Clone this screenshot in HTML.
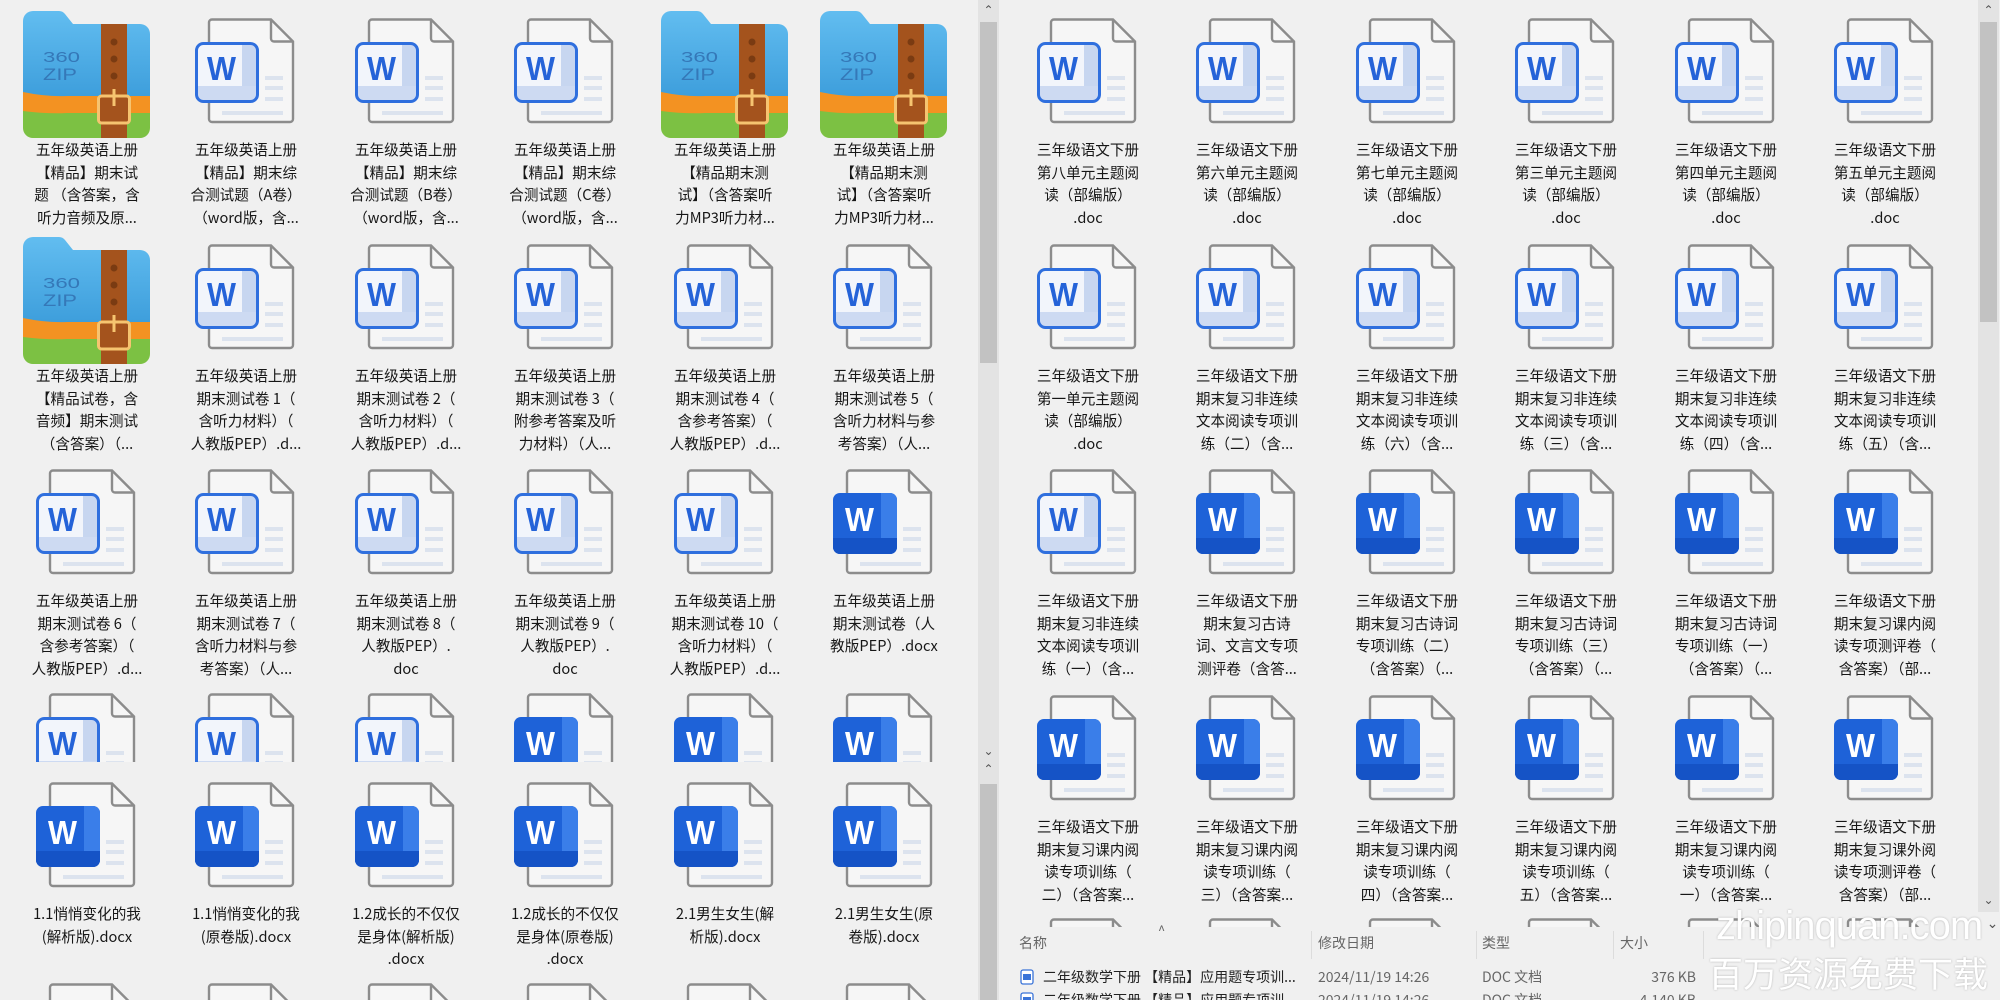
<!DOCTYPE html>
<html><head><meta charset="utf-8">
<style>
*{margin:0;padding:0;box-sizing:border-box}
html,body{width:2000px;height:1000px;overflow:hidden;background:#f0f0f0;font-family:"Liberation Sans","Noto Sans CJK SC",sans-serif;position:relative}
.c{position:absolute;width:160px;height:140px}
.c svg{position:absolute;left:0;top:0;width:160px;height:140px}
.c p{position:absolute;left:-4px;top:139px;width:168px;text-align:center;font-size:14.6px;line-height:22.5px;color:#161616;font-family:"Noto Sans CJK SC","WenQuanYi Zen Hei",sans-serif;white-space:nowrap}
.clip{position:absolute;overflow:hidden}
.sb{position:absolute;width:21px;background:#e3e3e3;overflow:hidden}
.th{position:absolute;left:2px;width:17px;background:#c2c2c2}
.ar{position:absolute;left:0;width:21px;text-align:center;font-size:12px;color:#555;line-height:14px}
.hd{position:absolute;font-size:14px;color:#666;font-family:"Noto Sans CJK SC",sans-serif}
.rw{position:absolute;font-size:14px;color:#222;font-family:"Noto Sans CJK SC",sans-serif;white-space:nowrap}
.sep{position:absolute;top:931px;width:1px;height:28px;background:#dcdcdc}
.wm{position:absolute;color:#fff;text-shadow:0 0 2px rgba(0,0,0,.25);white-space:nowrap}
</style></head><body>
<svg width="0" height="0" style="position:absolute">
<defs>
<symbol id="pg" viewBox="0 0 160 140">
<path d="M46,19.5 H105 L127,41.5 V119 a3,3 0 0 1 -3,3 H46 a3,3 0 0 1 -3,-3 V22.5 a3,3 0 0 1 3,-3 z" fill="#f6f6f6" stroke="#8c8c8c" stroke-width="2.4"/>
<path d="M105,19.5 V38.5 a3,3 0 0 0 3,3 H127" fill="none" stroke="#8c8c8c" stroke-width="2.4"/>
<rect x="99" y="76" width="18" height="4" fill="#dce3ee"/>
<rect x="99" y="86" width="18" height="4" fill="#dce3ee"/>
<rect x="99" y="97" width="18" height="4" fill="#dce3ee"/>
<rect x="56" y="111" width="61" height="4" fill="#dce3ee"/>
</symbol>
<symbol id="wo" viewBox="0 0 160 140">
<use href="#pg"/>
<rect x="30.5" y="43.5" width="61" height="58" rx="7" fill="#f2f5fb"/>
<rect x="76" y="45" width="14" height="55" fill="#c7d6f0"/>
<rect x="32" y="86" width="58" height="14" fill="#cddaf2"/>
<rect x="30.5" y="43.5" width="61" height="58" rx="7" fill="none" stroke="#2f6fde" stroke-width="3"/>
<text x="41" y="80" font-family="Liberation Sans" font-weight="bold" font-size="33" fill="#2563d8" textLength="29" lengthAdjust="spacingAndGlyphs">W</text>
</symbol>
<symbol id="ws" viewBox="0 0 160 140">
<use href="#pg"/>
<rect x="29" y="42" width="64" height="61" rx="7" fill="#1e62d8"/>
<path d="M77,42 H86 a7,7 0 0 1 7,7 V96 a7,7 0 0 1 -7,7 H77 z" fill="#3a7ee9"/>
<path d="M29,87 H93 V96 a7,7 0 0 1 -7,7 H36 a7,7 0 0 1 -7,-7 z" fill="#1553c6"/>
<text x="41" y="80" font-family="Liberation Sans" font-weight="bold" font-size="33" fill="#fff" textLength="29" lengthAdjust="spacingAndGlyphs">W</text>
</symbol>
<symbol id="zp" viewBox="0 0 160 140">
<defs><linearGradient id="bg" x1="0" y1="0" x2="0" y2="1"><stop offset="0" stop-color="#62bdf0"/><stop offset="1" stop-color="#3c9ddb"/></linearGradient></defs>
<path d="M26,11 H52 a8,8 0 0 1 6,3 L66,24 H133 a10,10 0 0 1 10,10 V100 H16 V21 a10,10 0 0 1 10,-10 z" fill="url(#bg)"/>
<path d="M16,92 Q40,97 60,96 H143 V115 H16 z" fill="#f39222"/>
<path d="M16,111 Q40,114 60,113 H143 V128 a10,10 0 0 1 -10,10 H26 a10,10 0 0 1 -10,-10 z" fill="#7cc143"/>
<rect x="94" y="24" width="26" height="114" fill="#a4531d"/>
<circle cx="107" cy="42" r="3.5" fill="#7a3b12"/>
<circle cx="107" cy="59" r="3.5" fill="#7a3b12"/>
<circle cx="107" cy="76" r="3.5" fill="#7a3b12"/>
<rect x="91.5" y="96" width="31" height="27" rx="3" fill="#a4531d" stroke="#f6c470" stroke-width="3"/>
<rect x="105.5" y="89" width="3" height="17" fill="#f6c470"/>
<text x="36" y="62" font-family="Liberation Sans" font-size="15" fill="#3578b8" textLength="37" lengthAdjust="spacingAndGlyphs">360</text>
<text x="36" y="80" font-family="Liberation Sans" font-size="17" fill="#3578b8" textLength="34" lengthAdjust="spacingAndGlyphs">ZIP</text>
</symbol>
</defs></svg>

<!-- LEFT PANEL -->
<div class="clip" style="left:0;top:0;width:978px;height:1000px">
<div class="c" style="left:7px;top:0"><svg><use href="#zp"/></svg><p>五年级英语上册<br>【精品】期末试<br>题 （含答案，含<br>听力音频及原...</p></div>
<div class="c" style="left:166px;top:0"><svg><use href="#wo"/></svg><p>五年级英语上册<br>【精品】期末综<br>合测试题（A卷）<br>（word版，含...</p></div>
<div class="c" style="left:326px;top:0"><svg><use href="#wo"/></svg><p>五年级英语上册<br>【精品】期末综<br>合测试题（B卷）<br>（word版，含...</p></div>
<div class="c" style="left:485px;top:0"><svg><use href="#wo"/></svg><p>五年级英语上册<br>【精品】期末综<br>合测试题（C卷）<br>（word版，含...</p></div>
<div class="c" style="left:645px;top:0"><svg><use href="#zp"/></svg><p>五年级英语上册<br>【精品期末测<br>试】（含答案听<br>力MP3听力材...</p></div>
<div class="c" style="left:804px;top:0"><svg><use href="#zp"/></svg><p>五年级英语上册<br>【精品期末测<br>试】（含答案听<br>力MP3听力材...</p></div>
<div class="c" style="left:7px;top:226px"><svg><use href="#zp"/></svg><p>五年级英语上册<br>【精品试卷，含<br>音频】期末测试<br>（含答案）（...</p></div>
<div class="c" style="left:166px;top:226px"><svg><use href="#wo"/></svg><p>五年级英语上册<br>期末测试卷 1（<br>含听力材料）（<br>人教版PEP）.d...</p></div>
<div class="c" style="left:326px;top:226px"><svg><use href="#wo"/></svg><p>五年级英语上册<br>期末测试卷 2（<br>含听力材料）（<br>人教版PEP）.d...</p></div>
<div class="c" style="left:485px;top:226px"><svg><use href="#wo"/></svg><p>五年级英语上册<br>期末测试卷 3（<br>附参考答案及听<br>力材料）（人...</p></div>
<div class="c" style="left:645px;top:226px"><svg><use href="#wo"/></svg><p>五年级英语上册<br>期末测试卷 4（<br>含参考答案）（<br>人教版PEP）.d...</p></div>
<div class="c" style="left:804px;top:226px"><svg><use href="#wo"/></svg><p>五年级英语上册<br>期末测试卷 5（<br>含听力材料与参<br>考答案）（人...</p></div>
<div class="c" style="left:7px;top:451px"><svg><use href="#wo"/></svg><p>五年级英语上册<br>期末测试卷 6（<br>含参考答案）（<br>人教版PEP）.d...</p></div>
<div class="c" style="left:166px;top:451px"><svg><use href="#wo"/></svg><p>五年级英语上册<br>期末测试卷 7（<br>含听力材料与参<br>考答案）（人...</p></div>
<div class="c" style="left:326px;top:451px"><svg><use href="#wo"/></svg><p>五年级英语上册<br>期末测试卷 8（<br>人教版PEP）.<br>doc</p></div>
<div class="c" style="left:485px;top:451px"><svg><use href="#wo"/></svg><p>五年级英语上册<br>期末测试卷 9（<br>人教版PEP）.<br>doc</p></div>
<div class="c" style="left:645px;top:451px"><svg><use href="#wo"/></svg><p>五年级英语上册<br>期末测试卷 10（<br>含听力材料）（<br>人教版PEP）.d...</p></div>
<div class="c" style="left:804px;top:451px"><svg><use href="#ws"/></svg><p>五年级英语上册<br>期末测试卷（人<br>教版PEP）.docx</p></div>
<div class="clip" style="left:0;top:675px;width:978px;height:87px">
<div class="c" style="left:7px;top:0"><svg><use href="#wo"/></svg></div>
<div class="c" style="left:166px;top:0"><svg><use href="#wo"/></svg></div>
<div class="c" style="left:326px;top:0"><svg><use href="#wo"/></svg></div>
<div class="c" style="left:485px;top:0"><svg><use href="#ws"/></svg></div>
<div class="c" style="left:645px;top:0"><svg><use href="#ws"/></svg></div>
<div class="c" style="left:804px;top:0"><svg><use href="#ws"/></svg></div>
</div>
<div class="c" style="left:7px;top:764px"><svg><use href="#ws"/></svg><p>1.1悄悄变化的我<br>(解析版).docx</p></div>
<div class="c" style="left:166px;top:764px"><svg><use href="#ws"/></svg><p>1.1悄悄变化的我<br>(原卷版).docx</p></div>
<div class="c" style="left:326px;top:764px"><svg><use href="#ws"/></svg><p>1.2成长的不仅仅<br>是身体(解析版)<br>.docx</p></div>
<div class="c" style="left:485px;top:764px"><svg><use href="#ws"/></svg><p>1.2成长的不仅仅<br>是身体(原卷版)<br>.docx</p></div>
<div class="c" style="left:645px;top:764px"><svg><use href="#ws"/></svg><p>2.1男生女生(解<br>析版).docx</p></div>
<div class="c" style="left:804px;top:764px"><svg><use href="#ws"/></svg><p>2.1男生女生(原<br>卷版).docx</p></div>
<div class="clip" style="left:0;top:965px;width:978px;height:35px">
<div class="c" style="left:7px;top:0"><svg><use href="#ws"/></svg></div>
<div class="c" style="left:166px;top:0"><svg><use href="#ws"/></svg></div>
<div class="c" style="left:326px;top:0"><svg><use href="#ws"/></svg></div>
<div class="c" style="left:485px;top:0"><svg><use href="#ws"/></svg></div>
<div class="c" style="left:645px;top:0"><svg><use href="#ws"/></svg></div>
<div class="c" style="left:804px;top:0"><svg><use href="#ws"/></svg></div>
</div>
</div>

<div class="sb" style="left:978px;top:0;height:1000px">
<div class="ar" style="top:3px">&#8963;</div>
<div class="th" style="top:22px;height:341px"></div>
<div class="ar" style="top:744px">&#8964;</div>
<div class="ar" style="top:762px">&#8963;</div>
<div class="th" style="top:784px;height:216px"></div>
</div>

<!-- RIGHT PANEL -->
<div class="clip" style="left:999px;top:0;width:979px;height:927px">
<div style="position:absolute;left:9px;top:0;width:970px;height:927px">
<div class="c" style="left:0;top:0"><svg><use href="#wo"/></svg><p>三年级语文下册<br>第八单元主题阅<br>读（部编版）<br>.doc</p></div>
<div class="c" style="left:159px;top:0"><svg><use href="#wo"/></svg><p>三年级语文下册<br>第六单元主题阅<br>读（部编版）<br>.doc</p></div>
<div class="c" style="left:319px;top:0"><svg><use href="#wo"/></svg><p>三年级语文下册<br>第七单元主题阅<br>读（部编版）<br>.doc</p></div>
<div class="c" style="left:478px;top:0"><svg><use href="#wo"/></svg><p>三年级语文下册<br>第三单元主题阅<br>读（部编版）<br>.doc</p></div>
<div class="c" style="left:638px;top:0"><svg><use href="#wo"/></svg><p>三年级语文下册<br>第四单元主题阅<br>读（部编版）<br>.doc</p></div>
<div class="c" style="left:797px;top:0"><svg><use href="#wo"/></svg><p>三年级语文下册<br>第五单元主题阅<br>读（部编版）<br>.doc</p></div>
<div class="c" style="left:0;top:226px"><svg><use href="#wo"/></svg><p>三年级语文下册<br>第一单元主题阅<br>读（部编版）<br>.doc</p></div>
<div class="c" style="left:159px;top:226px"><svg><use href="#wo"/></svg><p>三年级语文下册<br>期末复习非连续<br>文本阅读专项训<br>练（二）（含...</p></div>
<div class="c" style="left:319px;top:226px"><svg><use href="#wo"/></svg><p>三年级语文下册<br>期末复习非连续<br>文本阅读专项训<br>练（六）（含...</p></div>
<div class="c" style="left:478px;top:226px"><svg><use href="#wo"/></svg><p>三年级语文下册<br>期末复习非连续<br>文本阅读专项训<br>练（三）（含...</p></div>
<div class="c" style="left:638px;top:226px"><svg><use href="#wo"/></svg><p>三年级语文下册<br>期末复习非连续<br>文本阅读专项训<br>练（四）（含...</p></div>
<div class="c" style="left:797px;top:226px"><svg><use href="#wo"/></svg><p>三年级语文下册<br>期末复习非连续<br>文本阅读专项训<br>练（五）（含...</p></div>
<div class="c" style="left:0;top:451px"><svg><use href="#wo"/></svg><p>三年级语文下册<br>期末复习非连续<br>文本阅读专项训<br>练（一）（含...</p></div>
<div class="c" style="left:159px;top:451px"><svg><use href="#ws"/></svg><p>三年级语文下册<br>期末复习古诗<br>词、文言文专项<br>测评卷（含答...</p></div>
<div class="c" style="left:319px;top:451px"><svg><use href="#ws"/></svg><p>三年级语文下册<br>期末复习古诗词<br>专项训练（二）<br>（含答案）（...</p></div>
<div class="c" style="left:478px;top:451px"><svg><use href="#ws"/></svg><p>三年级语文下册<br>期末复习古诗词<br>专项训练（三）<br>（含答案）（...</p></div>
<div class="c" style="left:638px;top:451px"><svg><use href="#ws"/></svg><p>三年级语文下册<br>期末复习古诗词<br>专项训练（一）<br>（含答案）（...</p></div>
<div class="c" style="left:797px;top:451px"><svg><use href="#ws"/></svg><p>三年级语文下册<br>期末复习课内阅<br>读专项测评卷（<br>含答案）（部...</p></div>
<div class="c" style="left:0;top:677px"><svg><use href="#ws"/></svg><p>三年级语文下册<br>期末复习课内阅<br>读专项训练（<br>二）（含答案...</p></div>
<div class="c" style="left:159px;top:677px"><svg><use href="#ws"/></svg><p>三年级语文下册<br>期末复习课内阅<br>读专项训练（<br>三）（含答案...</p></div>
<div class="c" style="left:319px;top:677px"><svg><use href="#ws"/></svg><p>三年级语文下册<br>期末复习课内阅<br>读专项训练（<br>四）（含答案...</p></div>
<div class="c" style="left:478px;top:677px"><svg><use href="#ws"/></svg><p>三年级语文下册<br>期末复习课内阅<br>读专项训练（<br>五）（含答案...</p></div>
<div class="c" style="left:638px;top:677px"><svg><use href="#ws"/></svg><p>三年级语文下册<br>期末复习课内阅<br>读专项训练（<br>一）（含答案...</p></div>
<div class="c" style="left:797px;top:677px"><svg><use href="#ws"/></svg><p>三年级语文下册<br>期末复习课外阅<br>读专项测评卷（<br>含答案）（部...</p></div>
<div class="c" style="left:0;top:900px"><svg><use href="#ws"/></svg></div>
<div class="c" style="left:159px;top:900px"><svg><use href="#ws"/></svg></div>
<div class="c" style="left:319px;top:900px"><svg><use href="#ws"/></svg></div>
<div class="c" style="left:478px;top:900px"><svg><use href="#ws"/></svg></div>
<div class="c" style="left:638px;top:900px"><svg><use href="#ws"/></svg></div>
<div class="c" style="left:797px;top:900px"><svg><use href="#ws"/></svg></div>
</div>
</div>

<div class="sb" style="left:1978px;top:0;height:912px">
<div class="ar" style="top:3px">&#8963;</div>
<div class="th" style="top:22px;height:300px"></div>
<div class="ar" style="top:893px">&#8964;</div>
</div>

<div class="hd" style="left:1158px;top:920px;font-size:13px">^</div>
<div class="hd" style="left:1019px;top:933px">名称</div>
<div class="sep" style="left:1311px"></div>
<div class="hd" style="left:1318px;top:933px">修改日期</div>
<div class="sep" style="left:1476px"></div>
<div class="hd" style="left:1482px;top:933px">类型</div>
<div class="sep" style="left:1613px"></div>
<div class="hd" style="left:1620px;top:933px">大小</div>
<div class="sep" style="left:1703px"></div>
<svg style="position:absolute;left:1020px;top:969px" width="14" height="16"><rect x="1" y="1" width="12" height="14" rx="2" fill="#fff" stroke="#3a74d8" stroke-width="1.3"/><rect x="3" y="5" width="8" height="6" fill="#3a74d8"/></svg>
<div class="rw" style="left:1043px;top:967px">二年级数学下册 【精品】应用题专项训...</div>
<div class="rw" style="left:1318px;top:967px;color:#666">2024/11/19 14:26</div>
<div class="rw" style="left:1482px;top:967px;color:#666">DOC 文档</div>
<div class="rw" style="left:1640px;top:967px;color:#666;width:56px;text-align:right">376 KB</div>
<div class="clip" style="left:1000px;top:988px;width:978px;height:12px">
<svg style="position:absolute;left:20px;top:4px" width="14" height="16"><rect x="1" y="1" width="12" height="14" rx="2" fill="#fff" stroke="#3a74d8" stroke-width="1.3"/><rect x="3" y="5" width="8" height="6" fill="#3a74d8"/></svg>
<div class="rw" style="left:43px;top:2px">二年级数学下册 【精品】应用题专项训...</div>
<div class="rw" style="left:318px;top:2px;color:#666">2024/11/19 14:26</div>
<div class="rw" style="left:482px;top:2px;color:#666">DOC 文档</div>
<div class="rw" style="left:630px;top:2px;color:#666;width:66px;text-align:right">4,140 KB</div>
</div>
<div class="ar" style="left:1982px;top:916px;font-size:14px">&#8964;</div>

<div class="wm" style="left:1716px;top:904px;font-size:40px;font-family:'Liberation Sans',sans-serif;letter-spacing:-1px">zhipinquan.com</div>
<div class="wm" style="left:1708px;top:950px;font-size:35px;font-family:'Noto Sans CJK SC',sans-serif;line-height:46px;height:50px;overflow:hidden">百万资源免费下载</div>
</body></html>
